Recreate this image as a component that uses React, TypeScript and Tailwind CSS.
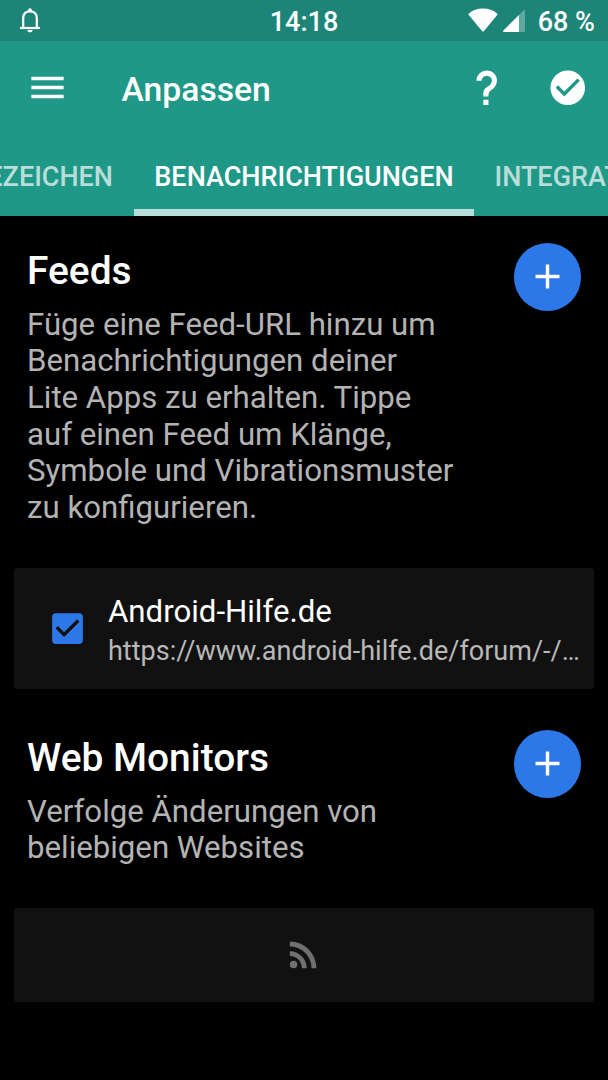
import type { ReactNode } from 'react'

function Icon({ path, className }: { path: string; className?: string }) {
  return (
    <svg viewBox="0 0 24 24" fill="currentColor" className={className}>
      <path d={path} />
    </svg>
  )
}

const icons = {
  menu: 'M3 18h18v-2H3v2zm0-5h18v-2H3v2zm0-7v2h18V6H3z',
  help: 'M10,19H13V22H10V19M12,2C17.35,2.22 19.68,7.62 16.5,11.67C15.67,12.67 14.33,13.33 13.67,14.17C13,15 13,16 13,17H10C10,15.33 10,13.92 10.67,12.92C11.33,11.92 12.67,11.33 13.5,10.67C15.92,8.43 15.32,5.26 12,5A3,3 0 0,0 9,8H6A6,6 0 0,1 12,2Z',
  done: 'M12 2C6.48 2 2 6.48 2 12s4.48 10 10 10 10-4.48 10-10S17.52 2 12 2zm-2 15l-5-5 1.41-1.41L10 14.17l7.59-7.59L19 8l-9 9z',
  add: 'M19 13h-6v6h-2v-6H5v-2h6V5h2v6h6v2z',
  check: 'M19 3H5c-1.11 0-2 .9-2 2v14c0 1.1.89 2 2 2h14c1.11 0 2-.9 2-2V5c0-1.1-.89-2-2-2zm-9 14l-5-5 1.41-1.41L10 14.17l7.59-7.59L19 8l-9 9z',
  rss: 'M6.18 15.64a2.18 2.18 0 1 0 0 4.36 2.18 2.18 0 0 0 0-4.36zM4 4.44v2.83c7.03 0 12.73 5.7 12.73 12.73h2.83c0-8.59-6.97-15.56-15.56-15.56zm0 5.66v2.83c3.9 0 7.07 3.17 7.07 7.07h2.83c0-5.47-4.43-9.9-9.9-9.9z',
}

function StatusBar() {
  return (
    <div className="relative flex h-[41px] items-center justify-between bg-[#1c8577] pr-[13px] pl-[19px] text-[27px] leading-none font-medium">
      <svg viewBox="0 0 22 26" className="-mt-px h-[26px] w-[22px]" fill="none" stroke="currentColor" strokeWidth="2.2">
        <path d="M4.200 20.500V11c0-4 2.600-6.700 6.800-6.700s6.800 2.700 6.800 6.700v9.500" />
        <path d="M1 21h20" />
        <path d="M11 1.200a1.800 1.800 0 0 1 1.800 1.800v1.500H9.200V3A1.800 1.800 0 0 1 11 1.200zM8.300 23h5.400c-.3 1.600-1.300 2.300-2.700 2.300s-2.400-.7-2.700-2.300z" fill="currentColor" stroke="none" />
      </svg>
      <span className="absolute inset-x-0 top-[9px] text-center">14:18</span>
      <div className="flex items-center">
        <svg viewBox="0 0 30 24" className="-mt-px h-[24px] w-[30px]" fill="currentColor">
          <path d="M15 .5c5.600 0 10.500 1.800 14 4.900.6.500.6 1 .2 1.600L16 23c-.6.700-1.400.7-2 0L.8 7C.4 6.400.4 5.900 1 5.400 4.500 2.300 9.400.5 15 .5z" />
        </svg>
        <svg viewBox="0 0 24 24" className="-mt-px ml-1 h-6 w-6" fill="currentColor">
          <path d="M17 7V24H2c-1 0-1.300-1-.6-1.600z" />
          <path d="M17 7l4.500-4.600c.7-.7 1.500-.4 1.500.5V23c0 .6-.4 1-1 1h-5z" opacity=".3" />
        </svg>
        <span className="mt-[3px] ml-[12px]">68 %</span>
      </div>
    </div>
  )
}

function Toolbar() {
  return (
    <div className="flex h-[95px] items-center pr-5 pl-[25.500px]">
      <Icon path={icons.menu} className="-mt-[3px] h-[43px] w-[43px]" />
      <h1 className="mt-[2px] ml-[53px] flex-1 text-[33.700px] leading-none font-medium">Anpassen</h1>
      <Icon path={icons.help} className="-mt-[2px] h-[41.500px] w-[41.500px]" />
      <Icon path={icons.done} className="-mt-[2px] ml-[39.500px] h-[41.500px] w-[41.500px]" />
    </div>
  )
}

function Tabs() {
  return (
    <div className="flex h-20 justify-center overflow-hidden text-[27px] leading-[82px] font-medium whitespace-nowrap">
      <div className="flex w-[134px] shrink-0 justify-end pr-[21px] text-white/70">LESEZEICHEN</div>
      <div className="w-[340px] shrink-0 border-b-[7px] border-[#b7ddd8] text-center">BENACHRICHTIGUNGEN</div>
      <div className="w-[134px] shrink-0 pl-[20.500px] text-white/70">INTEGRATION</div>
    </div>
  )
}

function Section({ title, children }: { title: string; children: ReactNode }) {
  return (
    <section className="flex justify-between px-[27px]">
      <div>
        <h2 className="-mt-px text-[38.900px] leading-[45px] font-medium">{title}</h2>
        <p className="mt-[13.500px] w-[440px] text-[31.200px] leading-[36.700px] text-[#b3b3b3]">{children}</p>
      </div>
      <button className="-mt-[6px] flex h-[67.500px] w-[67.500px] shrink-0 items-center justify-center rounded-full bg-[#2d78e8]">
        <Icon path={icons.add} className="h-[41px] w-[41px]" />
      </button>
    </section>
  )
}

export default function App() {
  return (
    <div className="h-[1080px] w-[608px] overflow-hidden bg-black font-['Roboto',sans-serif] text-white">
      <StatusBar />
      <header className="bg-[#1f9888]">
        <Toolbar />
        <Tabs />
      </header>
      <main className="pt-[33px]">
        <Section title="Feeds">
          Füge eine Feed-URL hinzu um<br />
          Benachrichtigungen deiner<br />
          Lite Apps zu erhalten. Tippe<br />
          auf einen Feed um Klänge,<br />
          Symbole und Vibrationsmuster<br />
          zu konfigurieren.
        </Section>
        <div className="mx-[14px] mt-[41.300px] flex h-[121px] items-center rounded-[3px] bg-[#111111] pr-[14px] pl-[33px]">
          <Icon path={icons.check} className="h-[41px] w-[41px] shrink-0 text-[#2d78e8]" />
          <div className="mt-[6px] ml-[20px] min-w-0">
            <div className="text-[31.200px] leading-[38px]">Android-Hilfe.de</div>
            <div className="text-[27px] leading-[40px] text-[#b8b8b8]">https://www.android-hilfe.de/forum/-/…</div>
          </div>
        </div>
        <div className="mt-[47px]">
          <Section title="Web Monitors">
            Verfolge Änderungen von<br />
            beliebigen Websites
          </Section>
        </div>
        <div className="mx-[14px] mt-[41px] flex h-[94px] items-center justify-center rounded-[3px] bg-[#111111]">
          <Icon path={icons.rss} className="mr-[2px] h-[41px] w-[41px] text-[#707070]" />
        </div>
      </main>
    </div>
  )
}
